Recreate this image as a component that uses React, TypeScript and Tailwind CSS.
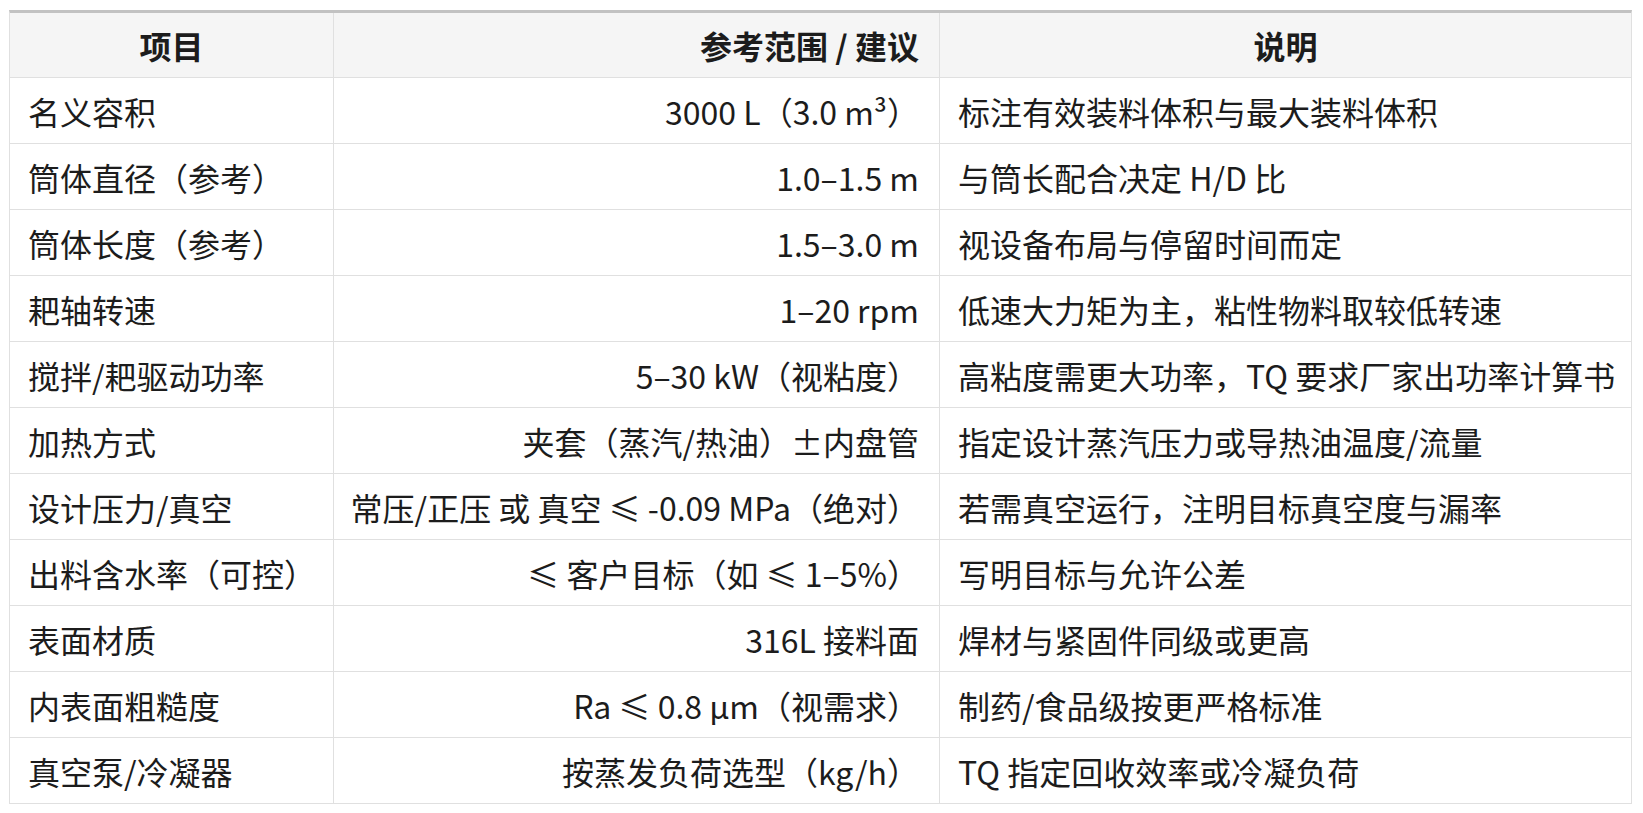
import React from "react";

const rows: [string, string, string][] = [
  ["名义容积", "3000 L（3.0 m³）", "标注有效装料体积与最大装料体积"],
  ["筒体直径（参考）", "1.0–1.5 m", "与筒长配合决定 H/D 比"],
  ["筒体长度（参考）", "1.5–3.0 m", "视设备布局与停留时间而定"],
  ["耙轴转速", "1–20 rpm", "低速大力矩为主，粘性物料取较低转速"],
  ["搅拌/耙驱动功率", "5–30 kW（视粘度）", "高粘度需更大功率，TQ 要求厂家出功率计算书"],
  ["加热方式", "夹套（蒸汽/热油）±内盘管", "指定设计蒸汽压力或导热油温度/流量"],
  ["设计压力/真空", "常压/正压 或 真空 ≤ -0.09 MPa（绝对）", "若需真空运行，注明目标真空度与漏率"],
  ["出料含水率（可控）", "≤ 客户目标（如 ≤ 1–5%）", "写明目标与允许公差"],
  ["表面材质", "316L 接料面", "焊材与紧固件同级或更高"],
  ["内表面粗糙度", "Ra ≤ 0.8 µm（视需求）", "制药/食品级按更严格标准"],
  ["真空泵/冷凝器", "按蒸发负荷选型（kg/h）", "TQ 指定回收效率或冷凝负荷"],
];

export default function App() {
  return (
    <div
      className="w-[1643px] h-[813px] bg-white pt-[10px] pl-[9px] text-[#1c1c1c]"
      style={{ fontFamily: '"Noto Sans CJK SC", "Noto Sans", sans-serif' }}
    >
      <div className="w-[1623px] border-t-[3px] border-t-[#c2c2c2] border-l border-r border-[#e0e0e0] text-[32px] leading-none">
        <div className="grid grid-cols-[324px_606px_1fr] h-[65px] bg-[#f5f5f5] border-b border-[#e0e0e0] font-bold">
          <div className="flex items-center justify-center border-r border-[#e0e0e0] px-5">项目</div>
          <div className="flex items-center justify-end border-r border-[#e0e0e0] px-5">参考范围 / 建议</div>
          <div className="flex items-center justify-center px-5">说明</div>
        </div>
        {rows.map((r, i) => (
          <div key={i} className="grid grid-cols-[324px_606px_1fr] h-[66px] border-b border-[#e0e0e0]">
            <div className="flex items-center border-r border-[#e0e0e0] pl-[18px] pr-3 whitespace-nowrap">{r[0]}</div>
            <div className="flex items-center justify-end border-r border-[#e0e0e0] pr-5 pl-3 whitespace-nowrap">{r[1]}</div>
            <div className="flex items-center pl-[18px] pr-3 whitespace-nowrap">{r[2]}</div>
          </div>
        ))}
      </div>
    </div>
  );
}
